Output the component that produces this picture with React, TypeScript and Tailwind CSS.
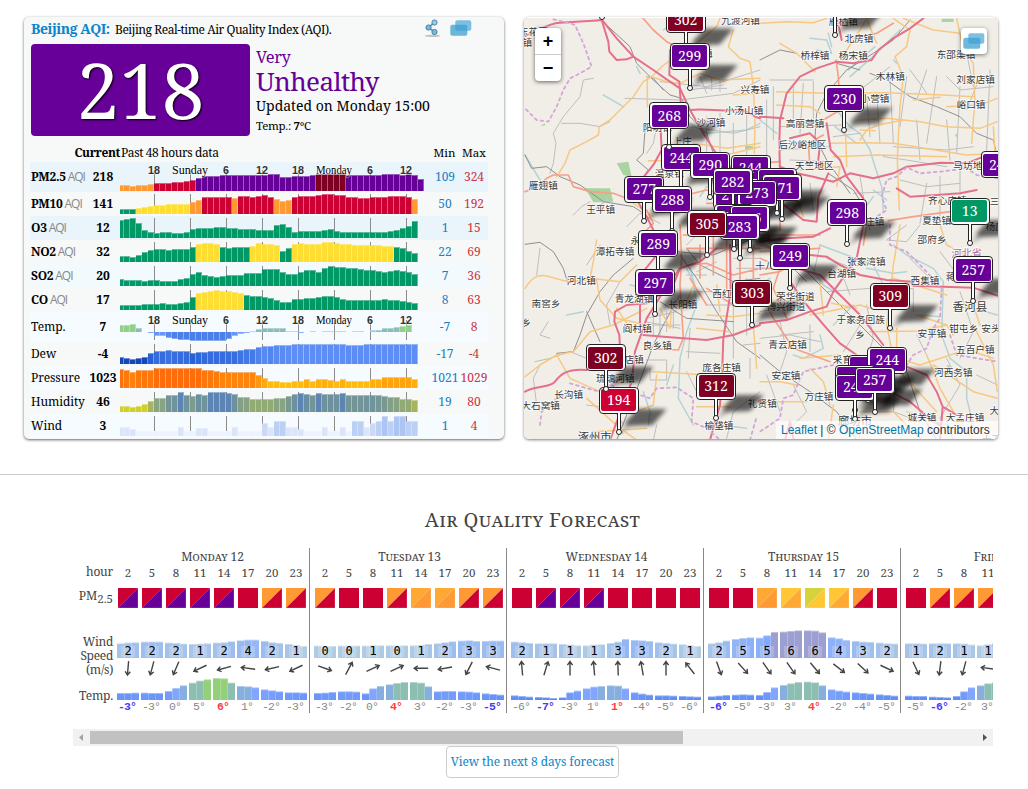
import React from "react";

const C: Record<string, string> = {
  g: "#009966",
  y: "#ffde33",
  o: "#ff9933",
  r: "#cc0033",
  p: "#660099",
  m: "#7e0023",
};

type Row = {
  name: string;
  aqi?: boolean;
  cur: string;
  min: string;
  max: string;
  tall?: boolean;
  bg: string;
  base: number;
  tops: number[];
  runs?: string;
  shade?: (top: number, i: number) => string;
  zero?: boolean;
};

const mix = (a: number[], b: number[], t: number) => {
  const k = Math.max(0, Math.min(1, t));
  return `rgb(${a.map((v, i) => Math.round(v + (b[i] - v) * k)).join(",")})`;
};

/* Bar tops are stored in thirds of a pixel, measured downwards. */
const rows: Row[] = [
  {
    name: "PM2.5", aqi: true, cur: "218", min: "109", max: "324", tall: true, bg: "bg-[#eaf5fb]", base: 153,
    tops: [136,136,139,136,134,131,129,128,128,127,126,124,121,113,109,108,107,104,106,106,104,105,106,106,104,103,101,112,111,107,108,108,106,101,101,101,101,101,104,105,105,104,104,104,102,101,102,104,103,105,116],
    runs: "6o7r20p5m13p",
  },
  {
    name: "PM10", aqi: true, cur: "141", min: "50", max: "192", bg: "", base: 222,
    tops: [206,206,206,203,201,199,194,194,193,193,192,192,187,180,172,172,172,172,172,174,168,168,170,168,165,170,176,183,180,172,168,168,167,165,162,162,165,165,170,172,173,173,172,171,170,169,168,168,171,176],
    runs: "3g9y2o5r1o6r3o20r1o",
  },
  {
    name: "O3", aqi: true, cur: "12", min: "1", max: "15", bg: "bg-[#eaf5fb]", base: 294,
    tops: [240,238,234,250,271,276,279,277,277,278,278,276,267,264,265,265,262,260,263,265,267,267,268,270,270,270,255,252,262,275,273,273,273,272,269,268,272,275,275,275,275,275,275,275,275,272,271,265,258,243],
    runs: "50g",
  },
  {
    name: "NO2", aqi: true, cur: "32", min: "22", max: "69", bg: "", base: 366,
    tops: [349,347,350,345,336,330,328,328,330,328,328,326,320,312,308,309,312,322,324,322,320,320,317,310,311,312,315,332,324,311,310,311,312,311,306,306,310,312,313,314,314,315,315,316,317,317,320,323,332,340],
    runs: "13g4y5g5y2g17y4g",
  },
  {
    name: "SO2", aqi: true, cur: "20", min: "7", max: "36", bg: "bg-[#f3fafd]", base: 438,
    tops: [417,419,421,420,422,421,421,422,424,422,418,415,402,396,405,409,410,408,406,406,406,400,400,400,388,388,388,395,401,403,396,391,391,397,385,378,380,382,383,385,386,389,391,394,395,394,391,393,396,402],
    runs: "50g",
  },
  {
    name: "CO", aqi: true, cur: "17", min: "8", max: "63", bg: "", base: 75,
    tops: [60,60,59,60,58,57,56,55,56,56,54,50,37,24,20,19,16,18,19,22,24,30,32,33,37,40,44,50,50,42,41,40,38,36,34,33,36,41,44,45,45,45,45,44,43,44,46,49,50,54],
    runs: "13g8y29g",
  },
  {
    name: "Temp.", cur: "7", min: "-7", max: "8", tall: true, zero: true, bg: "bg-[#f5fbfe]", base: 140,
    tops: [119,119,117,127,140,144,152,152,158,161,165,165,167,167,166,166,166,166,160,152,147,144,136,132,128,128,128,128,136,136,143,140,136,140,136,136,136,136,140,136,136,140,135,133,128,128,126,122,119,140],
    shade: (t) => (t < 124 ? "#90d08a" : t < 134 ? "#8bbcb8" : t < 140 ? "#a0c0ee" : t < 147 ? "#86aaf7" : mix([110, 154, 246], [74, 128, 232], (t - 150) / 12)),
  },
  {
    name: "Dew", cur: "-4", min: "-17", max: "-4", bg: "", base: 237,
    tops: [216,219,221,220,216,205,198,198,195,197,198,199,205,202,200,198,198,198,197,197,194,192,191,186,182,184,181,181,180,177,177,177,177,177,177,177,177,177,180,180,180,177,177,177,177,177,177,177,177,177],
    shade: (t, i) => (i < 5 ? "#1547b8" : mix([34, 94, 214], [94, 142, 245], (207 - t) / 28)),
  },
  {
    name: "Pressure", cur: "1023", min: "1021", max: "1029", bg: "bg-[#f5fbfe]", base: 309,
    tops: [252,255,260,255,254,254,249,249,249,249,249,249,249,249,254,255,257,261,261,261,261,261,261,270,280,288,288,292,292,288,288,283,288,283,283,284,288,283,288,288,288,288,283,282,277,277,277,277,277,283],
    shade: (t) => mix([255, 106, 10], [255, 190, 15], (t - 248) / 42),
  },
  {
    name: "Humidity", cur: "46", min: "19", max: "80", bg: "", base: 381,
    tops: [362,364,365,362,357,348,338,338,330,329,321,329,334,327,329,321,321,321,324,327,336,337,342,342,342,341,339,339,332,328,323,326,330,325,328,328,328,325,330,330,330,329,329,331,332,336,337,342,342,346],
    shade: (t) => (t > 354 ? "#d0d02c" : t > 345 ? "#a8b45c" : t > 340 ? "#92aa74" : t < 326 ? "#5c84b4" : mix([104, 142, 164], [136, 164, 128], (t - 326) / 12)),
  },
  {
    name: "Wind", cur: "3", min: "1", max: "4", bg: "bg-[#f5fbfe]", base: 453,
    tops: [426,426,432,438,438,438,438,438,438,438,426,438,438,430,430,438,438,438,438,426,438,438,438,438,414,426,407,407,426,426,432,438,438,438,426,438,438,426,438,407,407,426,414,407,393,407,393,393,407,407],
    shade: (t) => (t > 436 ? "#edf2fd" : t > 420 ? "#dbe5fa" : t > 410 ? "#cbd9f7" : t > 400 ? "#bccff5" : "#adc5f2"),
  },
];

const expand = (s: string) =>
  (s.match(/\d+[a-z]/g) || []).flatMap((r) => Array(parseInt(r)).fill(C[r.slice(-1)]) as string[]);

const ticks: [number, string][] = [
  [154, "18"], [190, "Sunday"], [226, "6"], [262, "12"], [298, "18"], [334, "Monday"], [370, "6"], [406, "12"],
];

function History({ row }: { row: Row }) {
  const H = row.tall ? 30 : 24;
  const bottom = row.zero ? 19.7 : row.tall ? 29 : 22;
  const cols = row.runs ? expand(row.runs) : [];
  return (
    <svg width="306" height={H} viewBox={`120 0 306 ${H}`} className="block" shapeRendering="crispEdges">
      {ticks.map(([x], i) => (
        <rect key={i} x={x} y={row.tall ? 8 : 2} width="1" height={row.tall ? 20 : 15} fill="#8c8c8c" />
      ))}
      {row.tops.map((t, i) => {
        const x = 118 + i * 6;
        const h = Math.round((row.base - t) / 3);
        const fill = row.shade ? row.shade(t, i) : cols[i];
        if (h === 0) return null;
        if (h < 0)
          return (
            <g key={i} fill={fill}>
              <rect x={x} y={20} width="6" height={-h} opacity=".65" />
              <rect x={x} y={20} width="5" height={Math.max(1, -h - 1)} />
            </g>
          );
        const y = Math.round(bottom) - h;
        return (
          <g key={i} fill={fill}>
            <rect x={x} y={y} width="6" height={h} opacity=".62" />
            <rect x={x} y={y + 1} width="5" height={h - 1} />
          </g>
        );
      })}
      {row.tall &&
        ticks.map(([x, s], i) => (
          <text
            key={i}
            x={x}
            y={12.3}
            textAnchor="middle"
            className={s.length > 2 ? "[font-family:'Liberation_Serif',serif] text-[12px] font-medium" : "[font-family:'Liberation_Sans',sans-serif] text-[11.5px] font-bold"}
            textLength={s.length * 6}
            lengthAdjust="spacingAndGlyphs"
            fill={s.length > 2 ? "#000" : "#333"}
            stroke="#fff"
            strokeOpacity=".5"
            strokeWidth="1.5"
            paintOrder="stroke"
          >
            {s}
          </text>
        ))}
    </svg>
  );
}

function Windows({ className }: { className?: string }) {
  return (
    <svg width="22" height="16" viewBox="0 0 22 16" className={className}>
      <rect x="5.3" y="0.3" width="16" height="10.5" rx="2" fill="#5db0dc" opacity=".8" />
      <rect x="0.3" y="4.8" width="17" height="11" rx="2" fill="#3d9fd3" opacity=".75" />
    </svg>
  );
}

function Share() {
  return (
    <svg width="17" height="19" viewBox="0 0 17 19">
      <ellipse cx="8.5" cy="16.8" rx="8" ry="1.2" fill="#c4c4c4" />
      <path d="M10.5 3.5L4.5 8.5L10.5 13" stroke="#5a9cc0" strokeWidth="1.8" fill="none" />
      <circle cx="10.5" cy="3.5" r="2.6" fill="#9cc9e2" stroke="#4688ae" />
      <circle cx="4.5" cy="8.5" r="2.6" fill="#7db6d6" stroke="#4688ae" />
      <circle cx="10.5" cy="13" r="2.6" fill="#7db6d6" stroke="#4688ae" />
    </svg>
  );
}

function AqiCard() {
  return (
    <section className="h-[422px] w-[480px] rounded-[5px] bg-[#f7f9f8] shadow-[0_1px_3px_rgba(0,0,0,0.6)]">
      <header className="flex h-[27px] items-start pl-[7px] leading-none">
        <span className="mt-[5px] w-[84px] whitespace-nowrap text-[14px] font-bold tracking-[-0.45px] text-[#0d84c9]">Beijing AQI:</span>
        <span className="mt-[7px] w-[309px] whitespace-nowrap text-[12px] tracking-[-0.45px] text-black">Beijing Real-time Air Quality Index (AQI).</span>
        <div className="mt-[2px] w-[26px]"><Share /></div>
        <Windows className="mt-[3px]" />
      </header>
      <div className="flex pl-[7px]">
        <div className="flex h-[92px] w-[219px] items-center justify-center rounded-[4px] bg-[#660099] text-[76px] leading-none text-white [text-shadow:1px_1px_2px_#000]">
          <span className="-mt-px">218</span>
        </div>
        <div className="ml-[6px] whitespace-nowrap leading-none text-black">
          <div className="mt-[5px] text-[16.5px] tracking-[-0.4px] text-[#660099]">Very</div>
          <div className="mt-[2px] text-[26px] leading-[27px] tracking-[-0.6px] text-[#660099]">Unhealthy</div>
          <div className="mt-[4px] text-[14px]">Updated on Monday 15:00</div>
          <div className="mt-[7px] text-[11.5px] tracking-[-0.3px]">Temp.: <b>7</b>°C</div>
        </div>
      </div>
      <div className="flex h-[26px] items-end pb-[2px] text-[12px] leading-[14px] text-black">
        <span className="w-[96px] text-right font-bold tracking-[-0.4px]">Current</span>
        <span className="w-[309px] pl-px tracking-[-0.4px]">Past 48 hours data</span>
        <span className="w-[31px] text-center text-[11.5px]">Min</span>
        <span className="w-[28px] text-center text-[11.5px]">Max</span>
      </div>
      <div className="ml-[6px] w-[458px]">
        {rows.map((r) => (
          <div key={r.name} className={`flex items-center text-[12px] leading-none text-black ${r.tall ? "h-[30px]" : "h-[24px]"} ${r.bg}`}>
            <div className="flex w-[56px] items-baseline gap-[2px] whitespace-nowrap pl-px">
              <span className={r.aqi ? "font-bold tracking-[-0.3px]" : "tracking-[-0.1px]"}>{r.name}</span>
              {r.aqi && <span className="text-[12px] tracking-[-1px] text-[#888] [font-family:'Open_Sans',sans-serif]">AQI</span>}
            </div>
            <div className="w-[34px] text-center font-bold"><span className="-mx-2">{r.cur}</span></div>
            <div className="w-[306px]"><History row={r} /></div>
            <div className="w-[38px] text-center text-[#1a7fc4]"><span className="-mx-2">{r.min}</span></div>
            <div className="w-[20px] text-center text-[#cc3344]"><span className="-mx-3">{r.max}</span></div>
          </div>
        ))}
      </div>
    </section>
  );
}

/* Map tiles: each quadrant is drawn in its own 3x coordinate system. */
type Quad = { x: number; y: number; pink: string[]; salmon: string[]; orange: string[]; gray: string[]; rail: string[]; water: string[]; border: string[]; green: string[]; labels: [number, number, string, number?, string?][] };

const quads: Quad[] = [
  {
    x: 520, y: 10,
    pink: [
      "M15 78C60 62 80 40 120 38S200 34 245 30L265 95 268 125 290 150 320 148 340 140",
      "M245 28L290 85 340 140 400 180 440 208 480 235 510 300 550 370 585 425 640 480",
      "M510 300C560 295 600 305 640 300S700 322 720 325", "M450 120L448 195 478 215 482 275",
      "M420 320L425 420 400 465 372 500", "M345 560L380 620 400 660",
    ],
    salmon: ["M365 20L400 60 440 95 470 110", "M15 545L45 535 80 505 100 495 145 495 160 530 210 545 280 550 320 565", "M480 560L560 540 640 560 720 545", "M380 600L400 640 380 660", "M600 470V660M660 440V660M700 470V660M560 500H720M560 580H720M560 630H720"],
    orange: [
      "M110 500L135 460 150 420 200 395 235 375 238 350 270 330 310 290 340 260 370 215 395 200 440 215 480 220",
      "M395 200L425 170 480 130 530 100 590 50 600 25", "M382 200V290", "M640 60L625 110 660 145 690 155 700 230 705 330 703 430",
      "M640 255L720 250", "M385 452H440", "M560 445L640 430 720 410", "M480 220L540 190 600 210 720 205", "M520 400L620 415 720 400", "M330 540L340 580 400 620",
    ],
    gray: [
      "M220 205L190 210 180 260 130 320 100 370 108 400 100 460 90 490", "M125 340L180 340 240 350 270 335", "M315 265L480 270 640 250 720 210",
      "M420 215L560 230 720 180", "M510 240L610 225M540 200L560 250M575 205V240M600 215V245M540 235H620", "M210 575L185 590 160 615", "M510 350L640 370 720 350", "M560 320V430M600 310V440M640 340V430M680 300V460", "M320 650L360 610 420 640", "M420 300L400 400 380 430",
    ],
    rail: ["M265 50L330 110 350 160 400 210 450 255 485 265 510 320 560 370 580 430", "M15 435L35 475 80 470 120 500 180 525 250 575 340 590 370 610", "M375 360L370 430 350 450 385 480 370 500", "M380 200L400 205 430 240"],
    water: ["M15 435L60 510M350 170L360 190", "M430 60L460 40 480 55M510 340L560 370 620 365 680 360 720 340", "M210 610L260 570", "M540 560L560 530 575 540 560 570", "M250 255L310 290"],
    border: ["M100 28L150 40 165 45 190 100 215 170 180 190 150 205 130 240 110 290 85 335 50 330 15 295"],
    green: ["M290 460L325 455 335 500 310 495Z", "M195 535L270 535 280 575 220 577Z", "M675 408h24v10h-24z", "M62 348l12 -8 2 6z"],
    labels: [[40, 65, "东花园"], [22, 97, "镇"], [662, 30, "九渡河镇"], [520, 130, "十三陵镇"], [705, 237, "兴寿镇"], [672, 300, "小汤山镇"], [573, 337, "沙河镇"], [412, 353, "阳坊镇"], [487, 393, "上庄"], [448, 490, "温泉镇"], [70, 525, "雁翅镇"], [242, 597, "王平镇"], [530, 603, "一"]],
  },
  {
    x: 760, y: 10,
    pink: ["M490 25L450 55 400 85 355 120 335 150 280 160 230 155 170 175 120 200 80 250 60 330 58 400 60 500", "M230 20L245 90", "M200 340L212 420 240 450 260 500 310 565", "M0 320L70 325", "M90 385L150 370 180 400 175 450", "M60 470L110 490 160 500 220 515 270 490 340 505 400 490 440 470 540 458 620 460 670 440", "M410 535L450 560 530 555 600 550 650 540", "M130 630L170 635 175 560 205 490", "M0 540L80 590 130 630"],
    salmon: ["M228 150L235 200 240 300 190 330", "M400 40L350 70 300 80", "M385 632L460 620 570 605", "M150 470L145 400 190 375", "M0 460L60 455", "M60 600V660M20 500V660"],
    orange: ["M0 40L80 35 160 38 200 25M260 120L300 60 320 25 340 80", "M400 25L450 60 440 110 405 140 430 200 420 290 415 380 412 450 418 600", "M50 245L200 250 380 248 550 255 640 260", "M300 330L380 325 480 335 560 350 660 355 712 335", "M300 390L320 360 355 345 430 330", "M50 285L150 290 180 310", "M210 400L300 398 400 400 620 435 712 430", "M590 25L610 120 640 160 645 280 640 330 635 400", "M220 440L350 435 560 440", "M330 50L350 100M430 25L520 60 600 70M560 290L660 285 712 265M460 270L540 262", "M60 100L110 130 165 185", "M250 270L258 400 260 470M120 480L240 470 230 530", "M700 350L705 430M300 360L345 362", "M110 560L130 620"],
    gray: ["M30 210H160M20 270V440M40 230V390M100 230V350M130 220L120 370M160 215V330", "M390 210L400 400M440 200L420 350M470 330L480 450M500 180L470 270M530 200L500 400M560 330L570 450M600 230L590 430M620 130L640 230M660 200L620 300M690 180L680 420", "M390 170L300 240 280 250M350 250L360 400M320 260L330 380M450 180L480 220 500 250", "M60 350L250 345M60 420L210 410M90 450L210 455", "M150 520L160 600M280 550L390 545M300 500L310 560M420 510L500 530 600 520M540 500V640M600 480V600M480 640L500 520", "M400 410L560 420 640 410M370 440L440 450 560 470M220 380L300 370M210 620L270 650", "M560 200L600 240 700 230"],
    rail: ["M0 150L60 120 110 130M330 190L380 210 450 260 530 290 600 320 650 370 700 390 712 440", "M450 30L400 90 340 130 260 180 200 250 170 310 165 380", "M300 180L230 160M205 490L280 540 305 580 330 660", "M165 380L200 450 270 550"],
    water: ["M150 85L200 90 215 130 170 120M205 70L215 110", "M270 200L350 130 420 60M265 180L345 110", "M230 300L270 350 300 370 330 420 345 470 365 530 370 600M300 270L260 290", "M225 350L290 400M400 150L410 160M340 560L310 600 320 660M0 330L50 370M380 570L340 540"],
    border: ["M712 505L650 495 620 475 540 485 480 490 440 472 410 500 380 510 365 560 380 600 350 620"],
    green: ["M5 478h16v10H5zM545 26h36v10h-36zM585 370l8 5-4 8z"],
    labels: [[250, 35, "雁栖镇"], [297, 86, "北房镇"], [165, 136, "桥梓镇"], [280, 136, "杨宋镇"], [588, 132, "东邵渠镇"], [391, 199, "木林镇"], [647, 208, "刘家店镇"], [345, 265, "小营镇"], [633, 283, "峪口镇"], [135, 341, "高丽营镇"], [127, 402, "后沙峪地区"], [163, 467, "天竺地区"], [638, 467, "马坊地区"], [562, 572, "齐心庄镇"], [530, 631, "夏垫镇"], [718, 575, "三河"], [720, 648, "杨庄镇"], [330, 635, "宋庄镇"]],
  },
  {
    x: 520, y: 225,
    pink: ["M15 500C50 480 90 490 105 470S140 430 200 435", "M300 370L298 330 283 290 285 260 320 240 380 235 410 215 460 180 480 130 540 110 590 70", "M370 330L430 335 560 345 640 330 720 300", "M480 130L430 200 380 280 345 380 335 470 270 645", "M630 60L632 200 610 340 605 480 600 540 570 645", "M410 90L370 140M360 240L360 320"],
    salmon: ["M480 0L485 100 480 180 490 340 475 375 410 372", "M500 120L560 115 640 150 720 130M540 60V160M580 0V150M620 0V200M660 30V180M700 60V180M490 30H720M500 70H720M560 190L640 240 720 230", "M510 160L560 240"],
    orange: ["M15 190C40 150 60 145 100 158S140 170 230 165L240 225 290 280 380 300", "M15 455L60 420 110 390 160 380 210 320 280 300 340 270 380 250", "M230 45L220 110 210 160 300 170 350 120", "M150 460L240 500M150 460L110 390M200 520L300 610 350 645M400 440L560 450", "M560 270L640 275 720 265M420 250L450 310 455 250M700 300L710 430M530 310L630 320", "M590 180L600 260M630 545L530 545", "M410 450L400 540 350 560M220 620L380 610", "M290 250L330 310 350 300M520 180L500 230"],
    gray: ["M45 410L90 400 150 380 250 420M60 420L40 460 50 540M200 540L280 550 310 600M380 280L470 260M375 290L480 310M400 270V330M420 265V330M440 260V320M460 260V310M380 300H480", "M500 380L600 385M510 310L505 400M380 405H440V465H390V430M670 360L720 355M640 240V400M680 160V330M520 200L600 200M560 240H700M500 150L560 150", "M85 290L60 330 90 340M240 60L200 120M60 70L50 150M690 400V460M720 500L640 560 620 640M500 440L540 520M410 600L400 645", "M300 170L260 240 270 300M540 20L500 60M590 110L530 140M640 100H720M650 130H720"],
    rail: ["M15 58L60 52 100 80 130 130 145 180M340 100L280 150 240 200 200 270 180 330 160 380 110 385", "M480 90L530 160 590 260 650 350 720 400", "M480 210L430 300 400 360 370 440 340 520 290 645", "M500 70L540 120 640 170 720 160", "M200 260L240 350M420 230L500 280 640 290M470 80L580 90 700 40"],
    water: ["M500 130L520 170 530 240 500 320 480 400 475 520 520 600", "M510 130L530 200M370 500L390 560 385 600M60 545L120 540M600 600L680 610M190 260L140 270M330 180L380 190", "M440 480L460 420"],
    border: ["M150 475L200 490 240 500 270 480 390 520 410 490 470 487 520 520 515 590 560 610 600 645", "M60 600L65 560 110 520 150 500M690 645L710 575"],
    green: ["M300 620l10 -5v14z"],
    labels: [[375, 45, "永定镇"], [285, 80, "潭拓寺镇"], [184, 166, "河北镇"], [78, 236, "南窖乡"], [18, 291, "乡"], [342, 221, "青龙湖镇"], [489, 238, "长阳镇"], [635, 206, "西红门镇"], [352, 310, "阎村镇"], [412, 362, "良乡镇"], [328, 402, "窦店镇"], [286, 460, "琉璃河镇"], [146, 509, "长沟镇"], [62, 541, "大石窝镇"], [224, 636, "涿州市", 34], [605, 426, "庞各庄镇"], [597, 601, "榆垡镇"], [727, 536, "礼贤镇"]],
  },
  {
    x: 760, y: 225,
    pink: ["M0 50L80 40 160 35 210 10M0 295L80 285 150 260 200 245 220 200 290 100 310 0", "M150 90L200 95 240 120 300 150 380 165 460 170 460 182 640 188 712 212", "M110 130L180 150 240 210 300 270 370 360", "M90 170L140 240 200 310 240 355 290 390", "M440 425L500 450 530 500 548 545 540 645M548 545L590 570M390 500L450 530 520 590 540 600M75 645L90 590 100 640"],
    salmon: ["M0 60L60 80 120 100 60 140 0 150M0 100L70 130M20 0L30 60M0 200L40 280 100 370 210 410", "M60 130L40 190 80 280M0 30H180M0 80L180 70M320 0L310 60M0 130H90"],
    orange: ["M150 270L300 240 330 250M215 235L290 250M180 170L190 270", "M330 320L480 318 560 300M470 270L560 300 580 330M410 310V400L480 420 600 380", "M420 0L400 120 380 300 400 400M400 160L560 210M500 390L540 490 580 560M520 420L640 500 712 520", "M0 470L60 470 110 480M150 430L190 470 210 540M300 560L400 560 480 640M420 440L530 560M640 300L700 420 712 500M640 380L700 400", "M0 530H140M220 540L205 645M590 590L640 645M540 0L560 60 640 100M640 240L660 300", "M360 210L330 230M120 400L240 390"],
    gray: ["M0 340L90 330 180 350M60 290L80 380 60 440M320 240L340 340 320 400M180 60L160 150M440 0L380 45 440 50 480 0M540 80L600 160M560 400L600 480 540 580M470 330L500 390", "M200 100L280 130M120 160L90 230M240 130L270 210M200 200L330 190M380 200L460 190 460 260M450 100L530 180M600 200L640 320 600 400M650 450L712 480M20 450L60 560M100 480L140 560 80 620M410 430L400 560 480 590M250 380L300 300", "M150 300V380M60 330L160 320M0 260L100 240M280 560L300 640M440 560L560 600"],
    rail: ["M0 390L60 440 150 500 230 560 290 645", "M140 140L200 200 260 260 330 330 400 400", "M0 50L70 90 110 140 140 170M60 130L120 110M440 440L480 560 530 645"],
    water: ["M180 60L260 90 340 120 380 200 360 220M150 120L190 180 240 210M320 130L400 145 440 140", "M400 60L440 90 520 130 550 170 545 330 570 400 620 440 620 520 640 600", "M0 180L30 160M180 330L190 370 130 400 100 390M280 240L220 300M560 590L580 645M640 250L712 270M140 600L200 610M480 270L540 275"],
    border: ["M390 0L390 60 440 80 490 130 545 190 540 280 520 310 500 370 460 390 440 420", "M220 420L130 440 100 510 70 520 60 580 0 620M570 330L590 390 712 410"],
    green: ["M396 310l6 2-3 10z", "M560 420l10 2-4 10z"],
    labels: [[516, 43, "邵府乡"], [620, 86, "河北省", 31, "#a36ba5"], [319, 108, "张家湾镇"], [245, 146, "台湖镇"], [495, 167, "西集镇"], [615, 155, "蒋福山镇"], [106, 214, "荣华街道"], [78, 244, "博兴街道"], [302, 284, "于家务回族"], [300, 327, "乡"], [630, 247, "香河县", 35], [516, 326, "安平镇"], [611, 311, "钳屯乡"], [722, 309, "安头屯镇"], [83, 359, "青云店镇"], [262, 403, "采育镇"], [646, 374, "五百户镇"], [78, 450, "安定镇"], [580, 441, "河西务镇"], [177, 515, "万庄镇"], [486, 576, "城关镇"], [615, 578, "大孟庄镇"], [703, 557, "大"], [285, 590, "廊坊市", 34], [15, 120, "十八"], [694, 643, "大王"]],
  },
];

type Pin = [number, number, string, string];
const pins: Pin[] = [
  [835, 3, "", C.p], [602, -15, "", C.p], [685.7, 19.5, "302", C.m], [689.7, 56, "299", C.p], [844.3, 98.7, "230", C.p], [681.3, 157.5, "244", C.p], [669.3, 115.7, "268", C.p],
  [750.5, 168, "244", C.p], [1000.7, 164.7, "244", C.p], [710.3, 165, "290", C.p], [776.7, 181, "", C.p], [733, 195, "275", C.p], [781.5, 187.7, "271", C.p], [757, 193, "273", C.p], [732.7, 181.3, "282", C.p],
  [644.3, 189, "277", C.p], [672.3, 199.7, "288", C.p], [969.7, 211, "13", C.g], [847.3, 212.7, "298", C.p],
  [734, 217, "285", C.p], [749.5, 218, "276", C.p], [739.5, 226.7, "283", C.p], [707.3, 223.7, "305", C.m], [658.3, 243.3, "289", C.p],
  [790.3, 256, "249", C.p], [973.3, 269.7, "257", C.p], [655.3, 282.3, "297", C.p], [752.3, 293, "303", C.m], [890.3, 296, "309", C.m],
  [618.7, 400, "194", C.r], [605.7, 357.7, "302", C.m], [716, 386, "312", C.m],
  [867.7, 368, "", C.p], [887.3, 360, "244", C.p], [854.7, 378, "", C.p], [854.7, 387, "245", C.p], [874.7, 380, "257", C.p],
];

function BaseMap() {
  const line = (ds: string[], stroke: string, w: number, dash?: string) =>
    ds.map((d, i) => <path key={stroke + i} d={d} stroke={stroke} strokeWidth={w} strokeDasharray={dash} />);
  return (
    <svg width="474" height="421" viewBox="524 18 474 421" className="block">
      <defs>
        <filter id="soft" x="-30%" y="-60%" width="160%" height="220%"><feGaussianBlur stdDeviation="2.2" /></filter>
      </defs>
      <rect x="524" y="18" width="474" height="421" fill="#f1eee8" />
      {quads.map((q, i) => (
        <g key={i} transform={`translate(${q.x} ${q.y}) scale(0.33333)`} fill="none" strokeLinejoin="round" strokeLinecap="round">
          {q.green.map((d, k) => <path key={k} d={d} fill="#a9d3a0" />)}
          {line(q.water, "#b5d3d6", 4.5)}
          {line(q.gray, "#bdbdbf", 3)}
          {line(q.rail, "#8f8f8f", 3)}
          {line(q.orange, "#f6c884", 4.5)}
          {line(q.salmon, "#f6a088", 5)}
          {line(q.pink, "#e5708a", 6)}
          {line(q.border, "#d3a6d8", 5.5, "8 11")}
        </g>
      ))}
      {quads.map((q, i) => (
        <g key={i} transform={`translate(${q.x} ${q.y}) scale(0.33333)`}>
          {q.labels.map(([x, y, s, size, col], k) => (
            <text key={k} x={x} y={y + 11} textAnchor="middle" fontSize={size || 29} fill={col || "#3a3a3a"} stroke="#fff" strokeOpacity=".75" strokeWidth="5" paintOrder="stroke" className="[font-family:'Noto_Sans_CJK_SC',sans-serif]">
              {s}
            </text>
          ))}
        </g>
      ))}
      {pins.map(([x, y], i) => (
        <polygon key={i} transform={`translate(${x} ${y + 32})`} points="0,0 10,-8 5,-8 19,-23 48,-23 34,-7 12,-6" fill="#000" opacity=".6" filter="url(#soft)" />
      ))}
    </svg>
  );
}

function MapCard() {
  return (
    <section className="relative h-[422px] w-[474px] overflow-hidden rounded-[5px] shadow-[0_1px_3px_rgba(0,0,0,0.5)]">
      <div className="pt-px"><BaseMap /></div>
      {pins.map(([x, y, s, col], i) => (
        <div key={i} className="absolute flex w-[40px] flex-col items-center" style={{ left: x - 524 - 20, top: y - 17 - 13.3 }}>
          <div className="flex h-[27px] w-[40px] items-center justify-center rounded-[4px] border border-[#222] bg-white p-[1.5px]">
            <div className="flex h-full w-full items-center justify-center rounded-[2px] text-[14px] leading-none text-white" style={{ background: col }}>{s}</div>
          </div>
          <div className="-mt-px h-[17px] w-[4px] border-x border-[#222] bg-white" />
          <div className="-mt-px h-[6px] w-[6px] rounded-full border border-[#222] bg-white" />
        </div>
      ))}
      <div className="absolute left-[11px] top-[11px] w-[26px] rounded-[4px] bg-white text-center shadow-[0_1px_4px_rgba(0,0,0,0.6)] [font-family:'Liberation_Sans',sans-serif]">
        <div className="flex h-[27px] items-center justify-center border-b border-[#ccc] text-[18px] font-bold leading-none text-black">+</div>
        <div className="flex h-[26px] items-center justify-center text-[18px] font-bold leading-none text-black">−</div>
      </div>
      <div className="absolute right-[11px] top-[11px] flex h-[26px] w-[26px] items-center justify-center rounded-[4px] bg-white shadow-[0_1px_4px_rgba(0,0,0,0.5)]"><Windows /></div>
      <div className="absolute bottom-0 right-0 h-[18px] w-[222px] whitespace-nowrap bg-white/70 pl-[5px] text-[12px] leading-[18px] text-[#333] [font-family:'Liberation_Sans',sans-serif]">
        <span className="text-[#0078a8]">Leaflet</span> | © <span className="text-[#0078a8]">OpenStreetMap</span> contributors
      </div>
    </section>
  );
}

const SQ: Record<string, string> = { R: "#cc0033", P: "#660099", O: "#ff9933", A: "#ffa833", Y: "#ffc733", G: "#d4d43a" };

type Day = { name: string; pm: string[]; wind: number[]; speed: number[]; dir: number[]; temp: number[]; deg: number[]; lo: number; hi: number };
const days: Day[] = [
  { name: "Monday 12", pm: ["RP","RP","RP","RP","RP","RR","OR","OR"], wind: [430,428,427,425,425,425,428,429,431,432,431,430,428,427,424,421,419,419,423,427,429,432,435,438], speed: [2,2,2,1,2,4,2,1], dir: [185,195,203,245,255,278,257,245], temp: [579,579,578,578,579,579,573,564,556,548,542,538,534,535,548,558,559,562,568,571,574,577,577,578], deg: [-3,-3,0,5,6,1,-2,-3], lo: 0, hi: 4 },
  { name: "Tuesday 13", pm: ["OR","RR","RR","OR","AO","AO","OR","OR"], wind: [437,438,438,437,437,437,437,436,436,436,437,436,436,435,432,430,427,424,422,421,423,423,422,422], speed: [0,0,1,0,1,2,3,3], dir: [110,28,65,65,270,260,207,285], temp: [579,578,576,574,574,575,580,565,558,553,549,546,546,548,559,574,573,573,574,575,577,580,582,584], deg: [-3,-2,0,4,3,-2,-3,-5], lo: 7, hi: 3 },
  { name: "Wednesday 14", pm: ["RR","RP","RP","RP","RR","RR","RR","RR"], wind: [425,427,429,430,430,430,432,434,436,436,434,433,429,425,417,420,421,423,427,429,431,433,436,438], speed: [2,1,1,1,3,3,2,1], dir: [355,17,0,355,358,350,0,322], temp: [586,588,590,591,592,594,592,577,572,565,560,558,556,557,565,577,581,584,586,586,587,588,589,590], deg: [-6,-7,-3,1,1,-4,-5,-6], lo: 1, hi: 4 },
  { name: "Thursday 15", pm: ["RR","RR","AO","YA","GY","YA","OR","RR"], wind: [430,427,422,417,414,412,413,406,396,395,393,391,391,392,397,412,415,420,423,425,426,428,430,431], speed: [2,5,5,6,6,4,3,2], dir: [160,138,145,145,140,128,133,115], temp: [589,587,585,584,583,584,585,576,562,555,550,546,545,547,556,568,572,575,577,579,581,583,585,587], deg: [-6,-5,-3,3,4,-2,-4,-5], lo: 0, hi: 4 },
  { name: "Friday 16", pm: ["RR","OR","OR","OR","RR","RR","RR","RR"], wind: [430,430,431,430,430,430,430,431,434,436,433,430,428,427,424,421,419,419,423,427,429,432,435,438], speed: [1,2,1,1,2,4,2,1], dir: [155,187,195,278,255,278,257,245], temp: [587,588,588,590,591,592,588,574,562,556,550,547,546,548,559,574,573,573,574,575,577,580,582,584], deg: [-5,-6,-2,3,4,-2,-3,-5], lo: 1, hi: 4 },
];

function Bars({ vals, base, h, tone }: { vals: number[]; base: number; h: number; tone: (px: number) => string }) {
  return (
    <svg width="22" height={h} viewBox={`0 0 22 ${h}`} className="block">
      {vals.map((v, i) => {
        const px = (base - v) / 3;
        return (
          <g key={i} fill={tone(px)}>
            <rect x={i * 7.5} y={h - px} width={i === 2 ? 7 : 7.5} height={px} opacity=".6" />
            <rect x={i * 7.5} y={h - px + 0.9} width={7} height={Math.max(0, px - 0.9)} />
          </g>
        );
      })}
    </svg>
  );
}

const windTone = (p: number) => (p > 25.5 ? "#9b9fd2" : mix([176, 204, 226], [130, 168, 255], (p - 12) / 11));
const tempTone = (p: number) => (p > 19.5 ? "#93d07a" : p > 16.3 ? "#8cbeb2" : p > 13.5 ? "#86aede" : mix([78, 128, 238], [128, 166, 255], p / 12));

function ForecastDay({ d }: { d: Day }) {
  return (
    <div className="h-[165px] w-[197px] shrink-0 border-r border-[#888] pl-[3px]">
      <div className="h-[17px] text-center text-[12px] leading-[17px] tracking-[-0.1px] text-[#444] [font-variant:small-caps]">{d.name}</div>
      <div className="grid w-[192px] grid-cols-8">
        {d.pm.map((pm, i) => (
          <div key={i} className="flex w-[24px] flex-col items-center">
            <div className="h-[23px] text-[11.5px] leading-[15px] text-[#444]">{[2, 5, 8, 11, 14, 17, 20, 23][i]}</div>
            <svg width="20" height="20" className="block">
              <rect width="20" height="20" fill={SQ[pm[0]]} />
              {pm[0] !== pm[1] && <path d="M20 0V20H0Z" fill={SQ[pm[1]]} stroke="#fff" strokeOpacity=".35" strokeWidth=".6" />}
            </svg>
            <div className="relative mt-[20px]">
              <Bars vals={d.wind.slice(i * 3, i * 3 + 3)} base={474} h={30} tone={windTone} />
              <span className="absolute bottom-[1px] left-[4px] h-[11px] w-[14px] bg-white/20 text-center text-[12px] leading-[11px] text-black [font-family:'DejaVu_Sans_Mono',monospace]">{d.speed[i]}</span>
            </div>
            <svg width="20" height="20" viewBox="-10 -10 20 20" className="block">
              <g transform={`translate(0 0.3) rotate(${d.dir[i]})`} stroke="#444" strokeWidth="1.4" fill="none">
                <path d="M0 7.2V-6.5M-2.6 -3.2L0 -6.8L2.6 -3.2" />
              </g>
            </svg>
            <Bars vals={d.temp.slice(i * 3, i * 3 + 3)} base={600} h={22} tone={tempTone} />
            <div className={`h-[13px] pr-[2px] text-[11.5px] leading-[13px] [font-family:'Liberation_Mono',monospace] ${i === d.lo ? "font-bold text-[#4a3cf5]" : i === d.hi ? "font-bold text-[#ff3c46]" : "text-[#888]"}`}>
              <span className="-mx-1 tracking-[-0.9px]">{d.deg[i]}°</span>
            </div>
          </div>
        ))}
      </div>
    </div>
  );
}

export default function App() {
  return (
    <div className="h-[789px] w-[1028px] overflow-hidden bg-white [font-family:'Droid_Serif','Noto_Serif','DejaVu_Serif_Condensed','DejaVu_Serif','Noto_Sans_CJK_SC',serif]">
      <div className="flex h-[474px] gap-[20px] pl-[24px] pt-[17px]">
        <AqiCard />
        <MapCard />
      </div>
      <div className="border-t border-[#ccc]" />
      <h2 className="mt-[31px] pl-[37px] text-center text-[20px] leading-[28px] tracking-[0.4px] text-[#444] [font-variant:small-caps]">Air Quality Forecast</h2>
      <div className="ml-[73px] mt-[14px] flex h-[181px] w-[920px] overflow-hidden">
        <div className="w-[40px] shrink-0 whitespace-nowrap text-right text-[12px] leading-[14px] text-[#444]">
          <div className="-ml-2 mt-[17px] h-[24px] tracking-[-0.2px]">hour</div>
          <div className="-ml-3 h-[46px]">PM<sub className="text-[11.5px]">2.5</sub></div>
          <div className="tracking-[-0.3px]">Wind<br />Speed<br />(m/s)</div>
          <div className="mt-[12px] tracking-[-0.2px]">Temp.</div>
        </div>
        {days.map((d) => <ForecastDay key={d.name} d={d} />)}
      </div>
      <div className="ml-[73px] flex h-[17px] w-[920px] items-center bg-[#f1f1f1]">
        <svg width="17" height="17"><path d="M10 5V12L6 8.5Z" fill="#a3a3a3" /></svg>
        <div className="h-[13px] w-[593px] bg-[#c1c1c1]" />
        <svg width="17" height="17" className="ml-auto"><path d="M7 5V12L11 8.5Z" fill="#505050" /></svg>
      </div>
      <div className="ml-[446px] flex h-[32px] w-[173px] items-center justify-center whitespace-nowrap rounded-[4px] border border-[#ccc] text-[12px] tracking-[-0.1px] text-[#0d84c9]">View the next 8 days forecast</div>
    </div>
  );
}
